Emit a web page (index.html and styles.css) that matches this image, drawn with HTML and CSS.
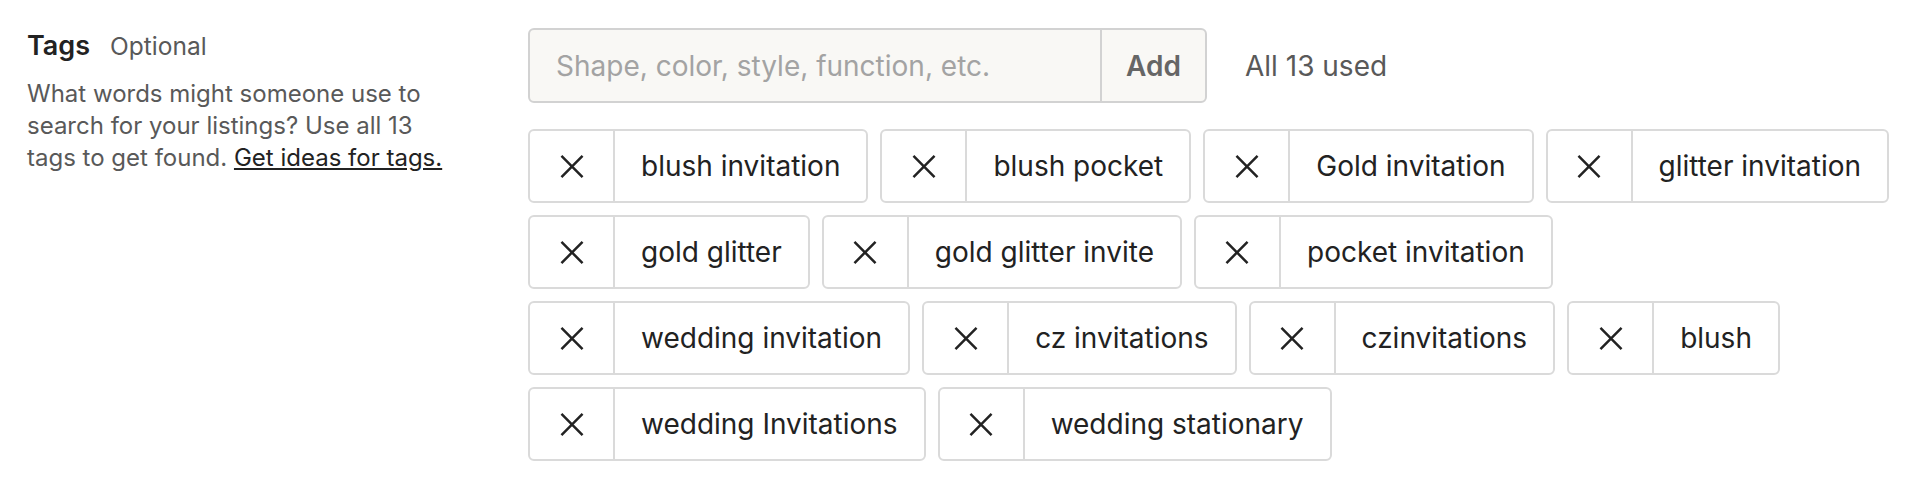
FILE: index.html
```html
<!DOCTYPE html>
<html lang="en">
<head>
    <meta charset="UTF-8">
    <title>Tags</title>
    <link rel="stylesheet" href="styles.css">
</head>
<body>
<div class="field">
    <div class="field__label">
        <div class="field__title">
            <span class="field__name">Tags</span>
            <span class="field__optional">Optional</span>
        </div>
        <p class="field__help">What words might someone use to search for your listings? Use all 13 tags to get found. <a href="#" class="field__link">Get ideas for tags.</a></p>
    </div>
    <div class="field__body">
        <div class="tag-input">
            <div class="tag-input__box">
                <input class="tag-input__field" type="text" placeholder="Shape, color, style, function, etc.">
                <button class="tag-input__add" type="button">Add</button>
            </div>
            <span class="tag-input__count">All 13 used</span>
        </div>
        <ul class="tags">
            <li class="tag"><button class="tag__remove" type="button"><svg viewBox="0 0 24 24"><path d="M1 1L23 23M23 1L1 23"/></svg></button><span class="tag__label">blush invitation</span></li>
            <li class="tag"><button class="tag__remove" type="button"><svg viewBox="0 0 24 24"><path d="M1 1L23 23M23 1L1 23"/></svg></button><span class="tag__label">blush pocket</span></li>
            <li class="tag"><button class="tag__remove" type="button"><svg viewBox="0 0 24 24"><path d="M1 1L23 23M23 1L1 23"/></svg></button><span class="tag__label">Gold invitation</span></li>
            <li class="tag"><button class="tag__remove" type="button"><svg viewBox="0 0 24 24"><path d="M1 1L23 23M23 1L1 23"/></svg></button><span class="tag__label">glitter invitation</span></li>
            <li class="tag"><button class="tag__remove" type="button"><svg viewBox="0 0 24 24"><path d="M1 1L23 23M23 1L1 23"/></svg></button><span class="tag__label">gold glitter</span></li>
            <li class="tag"><button class="tag__remove" type="button"><svg viewBox="0 0 24 24"><path d="M1 1L23 23M23 1L1 23"/></svg></button><span class="tag__label">gold glitter invite</span></li>
            <li class="tag"><button class="tag__remove" type="button"><svg viewBox="0 0 24 24"><path d="M1 1L23 23M23 1L1 23"/></svg></button><span class="tag__label">pocket invitation</span></li>
            <li class="tag"><button class="tag__remove" type="button"><svg viewBox="0 0 24 24"><path d="M1 1L23 23M23 1L1 23"/></svg></button><span class="tag__label">wedding invitation</span></li>
            <li class="tag"><button class="tag__remove" type="button"><svg viewBox="0 0 24 24"><path d="M1 1L23 23M23 1L1 23"/></svg></button><span class="tag__label">cz invitations</span></li>
            <li class="tag"><button class="tag__remove" type="button"><svg viewBox="0 0 24 24"><path d="M1 1L23 23M23 1L1 23"/></svg></button><span class="tag__label">czinvitations</span></li>
            <li class="tag"><button class="tag__remove" type="button"><svg viewBox="0 0 24 24"><path d="M1 1L23 23M23 1L1 23"/></svg></button><span class="tag__label">blush</span></li>
            <li class="tag"><button class="tag__remove" type="button"><svg viewBox="0 0 24 24"><path d="M1 1L23 23M23 1L1 23"/></svg></button><span class="tag__label">wedding Invitations</span></li>
            <li class="tag"><button class="tag__remove" type="button"><svg viewBox="0 0 24 24"><path d="M1 1L23 23M23 1L1 23"/></svg></button><span class="tag__label">wedding stationary</span></li>
        </ul>
    </div>
</div>
</body>
</html>
```

FILE: styles.css
```css
html,
body {
    margin: 0;
    padding: 0;
    background: #fff;
}

.field {
    display: flex;
    padding: 28px 0 0 27px;
    font-family: Inter, "Noto Sans", sans-serif;
    color: #222;
}

.field__label {
    flex: 0 0 501px;
}

.field__title {
    display: flex;
    align-items: baseline;
    line-height: 36px;
}

.field__name {
    font-size: 27px;
    font-weight: 600;
}

.field__optional {
    margin-left: 20px;
    font-size: 24.5px;
    color: #595959;
}

.field__help {
    max-width: 430px;
    margin: 14px 0 0;
    font-size: 24px;
    line-height: 32px;
    color: #595959;
}

.field__link {
    color: #222;
    text-decoration: underline;
}

.field__body {
    flex: 1;
}

.tag-input {
    display: flex;
    align-items: center;
}

.tag-input__box {
    display: flex;
    width: 679px;
    height: 75px;
    box-sizing: border-box;
    border: 2px solid #d2d2d2;
    border-radius: 6px;
    background: #f9f8f5;
    overflow: hidden;
}

.tag-input__field {
    flex: 1;
    min-width: 0;
    padding: 0 26px;
    border: 0;
    background: transparent;
    font-family: inherit;
    font-size: 28px;
    color: #222;
    outline: none;
}

.tag-input__field::placeholder {
    color: #a3a3a3;
}

.tag-input__add {
    width: 105px;
    border: 0;
    border-left: 2px solid #d2d2d2;
    background: transparent;
    font-family: inherit;
    font-size: 28px;
    font-weight: 600;
    color: #666;
}

.tag-input__count {
    margin-left: 38px;
    font-size: 28px;
    color: #595959;
}

.tags {
    display: flex;
    flex-wrap: wrap;
    gap: 12px;
    margin: 26px 0 0;
    padding: 0;
    list-style: none;
}

.tag {
    display: flex;
    height: 74px;
    box-sizing: border-box;
    border: 2px solid #dadada;
    border-radius: 6px;
    background: #fff;
}

.tag__remove {
    display: flex;
    justify-content: center;
    align-items: center;
    width: 85px;
    padding: 0;
    border: 0;
    border-right: 2px solid #dadada;
    background: transparent;
}

.tag__remove svg {
    width: 24px;
    height: 23px;
    fill: none;
    stroke: #222;
    stroke-width: 2.6;
}

.tag__label {
    display: flex;
    align-items: center;
    padding: 0 26px;
    font-size: 28px;
}
```
